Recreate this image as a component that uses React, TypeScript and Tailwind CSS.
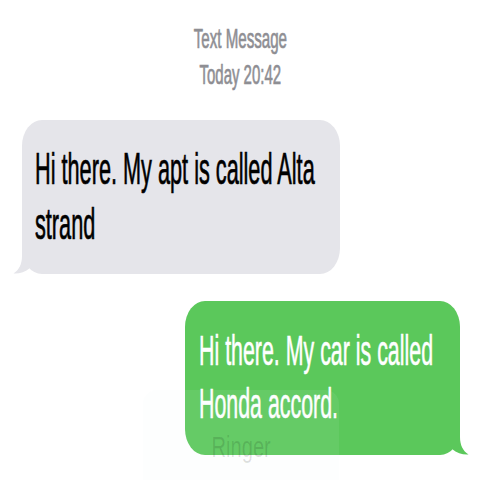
import React from "react";

const font = { fontFamily: '"Liberation Sans", Arial, sans-serif' };

function Line({ children, cls }: { children: React.ReactNode; cls: string }) {
  return <div className={"whitespace-nowrap origin-left " + cls}>{children}</div>;
}

export default function App() {
  return (
    <div
      className="relative w-[480px] h-[480px] overflow-hidden bg-white flex flex-col pt-[21px]"
      style={font}
    >
      <div className="flex flex-col items-center text-[28px] leading-[36px] text-[#8e8e93] [-webkit-text-stroke:0.7px_#8e8e93]">
        <div className="whitespace-nowrap origin-center scale-x-[0.54]">Text Message</div>
        <div className="whitespace-nowrap origin-center scale-x-[0.535]">Today 20:42</div>
      </div>

      <div className="relative ml-[22px] mt-[27px] w-[318px] rounded-[20px/26px] bg-[#e5e5ea] pl-[13px] pt-[21px] pb-[23px] text-[44px] leading-[55px] text-black [-webkit-text-stroke:0.7px_#000]">
        <svg
          className="absolute left-[-9px] bottom-0 w-[30px] h-[30px]"
          viewBox="0 0 30 30"
        >
          <path
            d="M9 0 L9 12 C9 20 6 26 0.5 29.5 C6 30 12 28 17 24 L17 0 Z"
            fill="#e5e5ea"
          />
        </svg>
        <div className="relative">
          <Line cls="scale-x-[0.493]">Hi there. My apt is called Alta</Line>
          <Line cls="scale-x-[0.493]">strand</Line>
        </div>
      </div>

      <div className="relative self-end mr-[20px] mt-[27px] w-[275px] rounded-[20px/26px] bg-[#5bc85b] pl-[14px] pt-[23px] pb-[25px] text-[42px] leading-[53px] text-white [-webkit-text-stroke:0.6px_#fff]">
        <svg
          className="absolute right-[-9px] bottom-0 w-[30px] h-[30px]"
          viewBox="0 0 30 30"
        >
          <path
            d="M21 0 L21 12 C21 20 24 26 29.5 29.5 C24 30 18 28 13 24 L13 0 Z"
            fill="#5bc85b"
          />
        </svg>
        <div className="relative">
          <Line cls="scale-x-[0.509]">Hi there. My car is called</Line>
          <Line cls="scale-x-[0.509]">Honda accord.</Line>
        </div>
      </div>

      <div className="absolute left-[143px] top-[390px] w-[196px] h-[120px] rounded-[14px] bg-[rgba(235,240,243,0.08)] flex flex-col items-center pt-[42px]">
        <div className="whitespace-nowrap origin-center scale-x-[0.67] text-[30px] leading-[30px] text-[rgba(0,0,0,0.12)]">
          Ringer
        </div>
      </div>
    </div>
  );
}
